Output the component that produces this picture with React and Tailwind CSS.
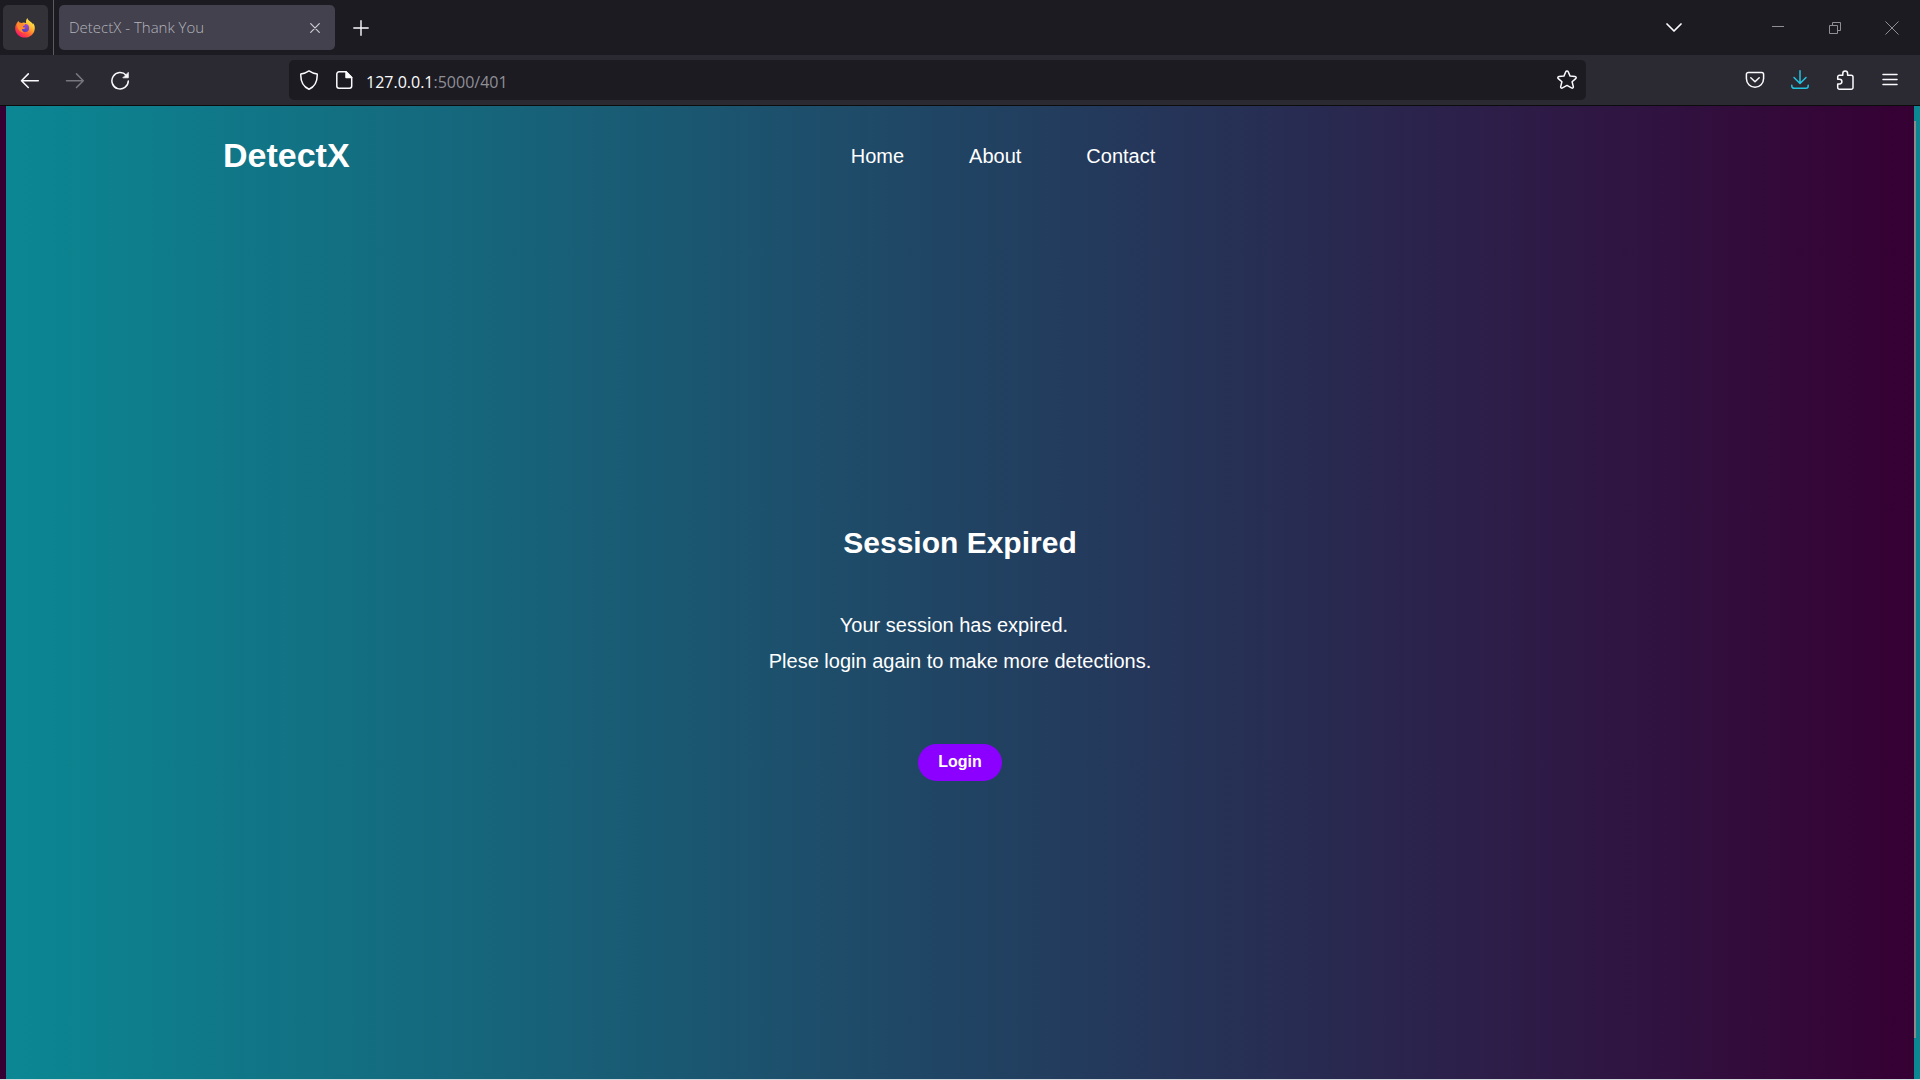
import React from "react";

function Icon({ children, className = "size-5", box = "0 0 20 20", width = 1.5 }) {
  return (
    <svg
      viewBox={box}
      className={className}
      fill="none"
      stroke="currentColor"
      strokeWidth={width}
      strokeLinecap="round"
      strokeLinejoin="round"
      aria-hidden="true"
    >
      {children}
    </svg>
  );
}

function FirefoxLogo() {
  return (
    <svg viewBox="0 0 20 20" className="size-5" aria-hidden="true">
      <defs>
        <linearGradient id="flame" x1="0.85" y1="0.1" x2="0.2" y2="0.95">
          <stop offset="0" stopColor="#fff44f" />
          <stop offset="0.35" stopColor="#ffb02e" />
          <stop offset="0.65" stopColor="#ff5a36" />
          <stop offset="1" stopColor="#f5156c" />
        </linearGradient>
        <linearGradient id="globe" x1="0.7" y1="0" x2="0.3" y2="1">
          <stop offset="0" stopColor="#a04bd8" />
          <stop offset="1" stopColor="#4a3fc0" />
        </linearGradient>
      </defs>
      <path
        d="M12.300.1c-1.100 1.500-1.600 3.400-1.200 5.100-1.600-.9-3.300-.9-4.600-.1C5.700 4.900 5 4.600 4.400 4.400 4 3.900 3.700 3.500 3.600 2.900 2.500 3.700 1.900 4.500 1.600 5.500.7 6.800.2 8.400.2 10.200.2 15.500 4.500 19.600 9.900 19.600s9.900-4.100 9.900-9.700c0-2.100-.7-3.800-2-5 .2.700.3 1.200.2 1.700C16.900 3.700 13.300 3.500 12.300.1Z"
        fill="url(#flame)"
      />
      <circle cx="10.100" cy="10" r="4" fill="url(#globe)" />
      <path
        d="M1.900 5.900c1.800-1.500 4-1.200 5.400-.3 1 .5 2.300.3 2.800.9-.2 1.100-1.800 1.300-2.300 2.100 0 .8 1.500 1.200 2.800 1.200-.8 1.300-2.500 1.300-3.600 1.100 0 1.600 1 3 2.600 3.600-4 .3-7.700-3.300-7.700-8.600Z"
        fill="#ff8a2b"
      />
    </svg>
  );
}

function TabStrip() {
  return (
    <div className="flex h-[55px] items-center bg-[#1c1b22] text-[#fbfbfe]">
      <button
        aria-label="Firefox View"
        className="ml-[3px] flex size-[45px] items-center justify-center rounded-[5px] bg-[#333238] pr-[2px]"
      >
        <FirefoxLogo />
      </button>
      <div className="ml-[5px] h-full w-px bg-[#5b5b60]" />
      <div className="ml-[5px] flex h-[45px] w-[276px] items-center justify-between rounded-[5px] bg-[#42414d] px-[10px]">
        <span className="text-[15px] font-light text-[#b4b4bc]">DetectX - Thank You</span>
        <button aria-label="Close tab" className="flex size-5 items-center justify-center text-[#cfcfd8]">
          <Icon className="size-[10px]" box="0 0 10 10" width={1.2}>
            <path d="M.7.700l8.600 8.600M9.300.7.700 9.300" />
          </Icon>
        </button>
      </div>
      <button aria-label="New tab" className="ml-[6px] flex size-10 items-center justify-center">
        <Icon className="size-4" box="0 0 16 16" width={1.4}>
          <path d="M8 .8v14.400M.8 8h14.400" />
        </Icon>
      </button>
      <button aria-label="List all tabs" className="mr-[55px] ml-auto flex size-10 items-center justify-center">
        <Icon className="size-4" box="0 0 16 16" width={1.7}>
          <path d="M1 4l7 7 7-7" />
        </Icon>
      </button>
      <div className="flex h-full text-[#8e8e93]">
        <button aria-label="Minimize" className="flex w-[57px] items-center justify-center">
          <Icon className="size-3" box="0 0 12 12" width={1}>
            <path d="M0 4.500h12" />
          </Icon>
        </button>
        <button aria-label="Restore" className="flex w-[57px] items-center justify-center">
          <svg viewBox="0 0 12 12" className="size-3" fill="none" stroke="currentColor" aria-hidden="true">
            <path d="M.5 3.500h8v8h-8ZM3.500 3.500v-3h8v8h-3" />
          </svg>
        </button>
        <button aria-label="Close window" className="flex w-[57px] items-center justify-center">
          <Icon className="size-[14px]" box="0 0 14 14" width={1}>
            <path d="M.7.700l12.600 12.600M13.300.7.700 13.300" />
          </Icon>
        </button>
      </div>
    </div>
  );
}

function ToolButton({ label, className = "text-[#fbfbfe]", children }) {
  return (
    <button aria-label={label} className="flex h-10 w-[45px] items-center justify-center">
      <span className={className}>
        <Icon>{children}</Icon>
      </span>
    </button>
  );
}

function Toolbar() {
  return (
    <div className="flex h-[51px] items-center border-b border-[#0c0c0d] bg-[#2b2a33] pr-2 pl-[7px] text-[#fbfbfe]">
      <ToolButton label="Back">
        <path d="M18.300 10.700H1.500M8.300 3.900 1.500 10.700l6.800 6.800" />
      </ToolButton>
      <ToolButton label="Forward" className="text-[#77767e]">
        <path d="M1.500 10.700H18.300M11.500 3.900 18.300 10.700l-6.800 6.800" />
      </ToolButton>
      <ToolButton label="Reload">
        <path d="M16.200 5.300A8.200 8.200 0 1 0 18.300 11" />
        <path d="M18.300 2.700v5.100h-5.100Z" fill="currentColor" strokeWidth="0.8" />
      </ToolButton>
      <div className="ml-[147px] flex h-10 flex-1 items-center rounded-[5px] bg-[#1c1b22] pr-[9px] pl-[10px]">
        <button aria-label="Tracking protection">
          <Icon>
            <path d="M10 .9c2.500 1.700 5 2.700 8.200 3.200.3 6.800-1.700 12.300-8.200 15.200C3.500 16.400 1.500 10.900 1.800 4.100 5 3.600 7.500 2.600 10 .9Z" />
          </Icon>
        </button>
        <button aria-label="Site information" className="ml-[15px]">
          <Icon>
            <path d="M12 1.800H5A2.200 2.200 0 0 0 2.800 4v12A2.200 2.200 0 0 0 5 18.200h10.500a2.200 2.200 0 0 0 2.200-2.200V7.500Z" />
            <path d="M12 1.800v5.700h5.700Z" fill="currentColor" />
          </Icon>
        </button>
        <div className="ml-3 flex-1 pt-[3px] text-[16px]">
          127.0.0.1<span className="text-[#8f8f96]">:5000/401</span>
        </div>
        <button aria-label="Bookmark this page">
          <Icon>
            <path d="M8.800 1.700a1.300 1.300 0 0 1 2.400 0l1.900 4.400 4.900.4c1.200.1 1.500 1.400.7 2.100l-3.600 3.200 1.200 4.800c.3 1.200-.8 1.900-1.800 1.300L10 15.400l-4.500 2.500c-1 .6-2.100-.1-1.800-1.300l1.200-4.800L1.300 8.600C.5 7.900.8 6.600 2 6.500l4.900-.4Z" />
          </Icon>
        </button>
      </div>
      <div className="ml-[146px] flex">
        <ToolButton label="Save to Pocket">
          <path d="M3.300 2.500h13.400a1.900 1.900 0 0 1 1.900 1.900v4.200a8.600 8.600 0 0 1-17.200 0V4.400a1.900 1.900 0 0 1 1.900-1.900Z" />
          <path d="M5.800 7.800 10 11.800l4.200-4" />
        </ToolButton>
        <ToolButton label="Downloads" className="text-[#23c4e0]">
          <path d="M10 .8v12.400M4 7.500l6 6 6-6M1.800 15.200v.8a2.300 2.300 0 0 0 2.300 2.300h11.800a2.300 2.300 0 0 0 2.300-2.300v-.8" />
        </ToolButton>
        <ToolButton label="Extensions">
          <path d="M4.500 19.200A1.800 1.800 0 0 1 2.700 17.400V14h1.800a2.400 2.400 0 0 0 0-4.800H2.700V7a1.800 1.800 0 0 1 1.800-1.800h3.300V3.400a2.400 2.400 0 0 1 4.800 0v1.800h3.600A1.800 1.800 0 0 1 18 7v10.400a1.800 1.800 0 0 1-1.800 1.800Z" />
        </ToolButton>
        <ToolButton label="Open menu">
          <path d="M3 4.500h14M3 9.500h14M3 14.500h14" />
        </ToolButton>
      </div>
    </div>
  );
}

function Page() {
  return (
    <div className="flex flex-1 bg-[#360033] pl-[6px] font-['Liberation_Sans',Arial,sans-serif] text-white">
      <div className="flex flex-1 flex-col bg-linear-to-r/srgb from-[#0b8793] to-[#360033]">
        <header className="grid h-[100px] grid-cols-[1fr_auto_1fr] items-center">
          <a href="#" className="pb-[2px] pl-[217px] text-[34px] font-bold">DetectX</a>
          <nav className="flex gap-[65px] pl-[86px] text-[20px]">
            <a href="#home">Home</a>
            <a href="#about">About</a>
            <a href="#contact">Contact</a>
          </nav>
        </header>
        <main className="flex flex-1 flex-col items-center justify-center pt-[18px] text-center">
          <h1 className="text-[30px] leading-10 font-bold">Session Expired</h1>
          <p className="mt-11 text-[20px] leading-9">
            <span className="block pr-3">Your session has expired.</span>
            Plese login again to make more detections.
          </p>
          <button className="mt-[65px] h-[37px] rounded-full bg-[#8c00ff] px-5 text-[16px] font-bold">Login</button>
        </main>
      </div>
      <div className="w-[6px] bg-[#0b8793] pt-[15px] pb-[41px]">
        <div className="h-full w-[2px] bg-[#8b8b8b]" />
      </div>
    </div>
  );
}

export default function App() {
  return (
    <div className="flex min-h-screen flex-col border-b border-[#d5dadd] font-['Open_Sans','Noto_Sans',sans-serif]">
      <TabStrip />
      <Toolbar />
      <Page />
    </div>
  );
}
